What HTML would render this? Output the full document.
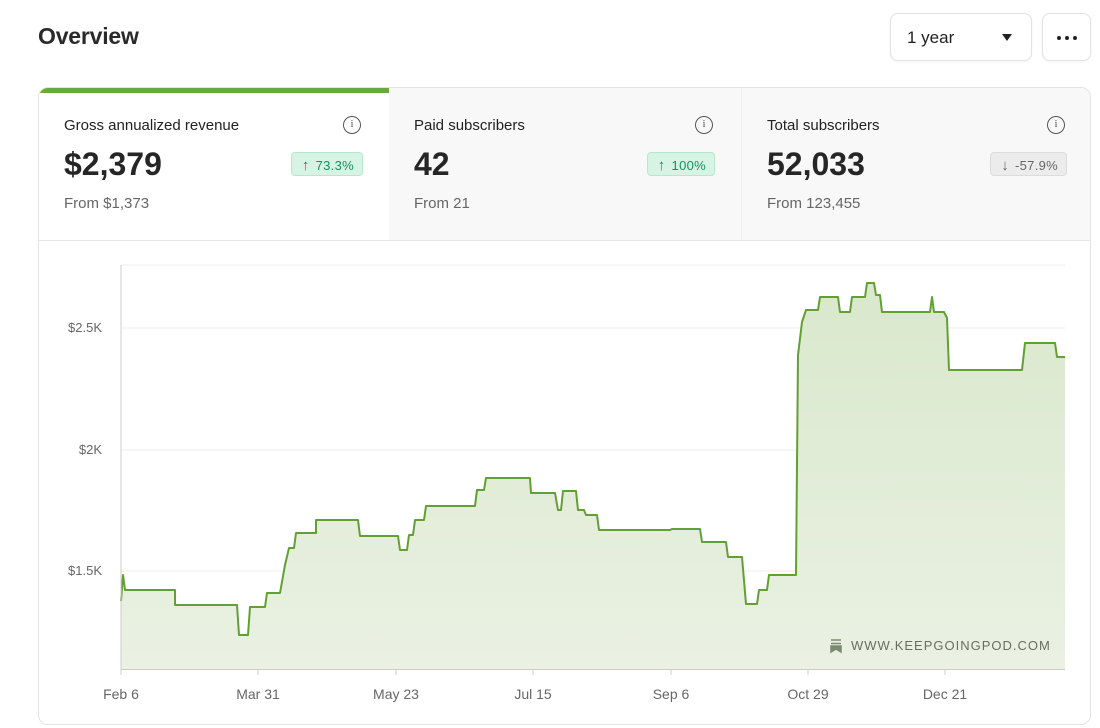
<!DOCTYPE html>
<html><head><meta charset="utf-8"><style>
*{margin:0;padding:0;box-sizing:border-box}
body{width:1100px;height:728px;overflow:hidden;background:#fff;font-family:"Liberation Sans",Arial,sans-serif;color:#222;position:relative}
.t{position:absolute;left:38px;top:23px;font-size:23px;font-weight:bold;color:#2a2a2a;letter-spacing:-0.2px}
.sel{position:absolute;left:890px;top:13px;width:142px;height:48px;border:1px solid #e2e2e2;border-radius:8px;font-size:17px;padding:14px 0 0 16px;color:#222;box-shadow:0 1px 2px rgba(0,0,0,.05)}
.sel:after{content:"";position:absolute;right:19px;top:20px;border-left:5px solid transparent;border-right:5px solid transparent;border-top:7px solid #222}
.more{position:absolute;left:1042px;top:13px;width:49px;height:48px;border:1px solid #e2e2e2;border-radius:8px;box-shadow:0 1px 2px rgba(0,0,0,.05)}
.more i{position:absolute;top:22px;width:4px;height:4px;border-radius:50%;background:#222}
.card{position:absolute;left:38px;top:87px;width:1053px;height:638px;border:1px solid #e3e3e3;border-radius:10px;overflow:hidden}
.tile{position:absolute;top:0;height:153px;background:#f8f8f8;border-bottom:1px solid #e6e6e6}
.tile.a{background:#fff;border-top:5px solid #6aa83c;left:0;width:350px}
.lab{position:absolute;left:25px;top:29px;font-size:15px;color:#222}
.num{position:absolute;left:25px;top:58px;font-size:32px;font-weight:bold;color:#262626}
.from{position:absolute;left:25px;top:107px;font-size:15px;color:#666}
.info{position:absolute;right:28px;top:28px;width:18px;height:18px;border:1.5px solid #555;border-radius:50%;font-size:11px;text-align:center;line-height:15px;color:#555;font-family:"Liberation Serif",serif}
.bd{position:absolute;right:26px;top:64px;height:24px;border-radius:4px;font-size:13px;padding:4px 8px 0 10px;background:#d6f3e4;border:1px solid #b5e8cf;color:#14925a;letter-spacing:.3px}
.bd b{font-size:15px;margin-right:6px}
.bd.g{background:#ececec;border-color:#dcdcdc;color:#666}
svg{position:absolute;left:0;top:0}
.yl{position:absolute;font-size:13px;color:#666;text-align:right;width:60px;left:42px}
.xl{position:absolute;top:686px;font-size:14px;color:#666;width:80px;text-align:center}
</style></head><body>
<div class="t">Overview</div>
<div class="sel">1 year</div>
<div class="more"><i style="left:14px"></i><i style="left:22px"></i><i style="left:30px"></i></div>
<div class="card">
 <div class="tile a"><div class="lab" style="top:24px">Gross annualized revenue</div><div class="info" style="top:23px">i</div><div class="num" style="top:53px">$2,379</div><div class="bd" style="top:59px"><b>↑</b>73.3%</div><div class="from" style="top:102px">From $1,373</div></div>
 <div class="tile" style="left:350px;width:352px;top:0;height:153px"><div class="lab">Paid subscribers</div><div class="info">i</div><div class="num">42</div><div class="bd"><b>↑</b>100%</div><div class="from">From 21</div></div>
 <div class="tile" style="left:702px;width:352px;border-left:1px solid #eee"><div class="lab">Total subscribers</div><div class="info">i</div><div class="num">52,033</div><div class="bd g"><b>↓</b>-57.9%</div><div class="from">From 123,455</div></div>
</div>
<svg width="1100" height="728">
<defs><linearGradient id="gf" x1="0" y1="0" x2="0" y2="1"><stop offset="0" stop-color="#d9e8cc"/><stop offset="1" stop-color="#eaf1e3"/></linearGradient></defs>
<line x1="121" y1="265" x2="1065" y2="265" stroke="#eee"/>
<line x1="121" y1="328" x2="1065" y2="328" stroke="#eee"/>
<line x1="121" y1="450" x2="1065" y2="450" stroke="#eee"/>
<line x1="121" y1="571" x2="1065" y2="571" stroke="#eee"/>
<path d="M121,601 L123,575 L125,590 L175,590 L175,605 L237,605 L239,635 L248,635 L250,607 L265,607 L267,593 L280,593 L285,565 L289,548 L294,548 L296,533 L316,533 L316,520 L358,520 L360,536 L398,536 L400,550 L407,550 L409,535 L413,535 L415,520 L424,520 L426,506 L475,506 L477,490 L484,490 L486,478 L530,478 L531,493 L555,493 L558,510 L561,510 L563,491 L576,491 L578,510 L584,510 L586,515 L597,515 L599,530 L670,530 L672,529 L700,529 L702,542 L726,542 L728,557 L742,557 L746,604 L757,604 L759,590 L767,590 L769,575 L796,575 L798,355 L802,322 L806,310 L818,310 L820,297 L838,297 L840,312 L850,312 L852,297 L865,297 L867,283 L874,283 L876,295 L880,295 L882,312 L930,312 L932,297 L934,312 L944,312 L947,318 L949,370 L1022,370 L1025,343 L1055,343 L1057,357 L1065,357 L1065,669 L121,669 Z" fill="url(#gf)"/>
<path d="M121,601 L123,575 L125,590 L175,590 L175,605 L237,605 L239,635 L248,635 L250,607 L265,607 L267,593 L280,593 L285,565 L289,548 L294,548 L296,533 L316,533 L316,520 L358,520 L360,536 L398,536 L400,550 L407,550 L409,535 L413,535 L415,520 L424,520 L426,506 L475,506 L477,490 L484,490 L486,478 L530,478 L531,493 L555,493 L558,510 L561,510 L563,491 L576,491 L578,510 L584,510 L586,515 L597,515 L599,530 L670,530 L672,529 L700,529 L702,542 L726,542 L728,557 L742,557 L746,604 L757,604 L759,590 L767,590 L769,575 L796,575 L798,355 L802,322 L806,310 L818,310 L820,297 L838,297 L840,312 L850,312 L852,297 L865,297 L867,283 L874,283 L876,295 L880,295 L882,312 L930,312 L932,297 L934,312 L944,312 L947,318 L949,370 L1022,370 L1025,343 L1055,343 L1057,357 L1065,357" fill="none" stroke="#62a034" stroke-width="2" stroke-linejoin="round"/>
<line x1="121" y1="265" x2="121" y2="670" stroke="#ccc"/>
<line x1="121" y1="669.5" x2="1065" y2="669.5" stroke="#ccc"/>
<g stroke="#ccc"><line x1="121" y1="670" x2="121" y2="675"/><line x1="258" y1="670" x2="258" y2="675"/><line x1="396" y1="670" x2="396" y2="675"/><line x1="533" y1="670" x2="533" y2="675"/><line x1="671" y1="670" x2="671" y2="675"/><line x1="808" y1="670" x2="808" y2="675"/><line x1="945" y1="670" x2="945" y2="675"/></g>
<path d="M831,640h10M831,643.5h10M831,646h10v6l-5,-3l-5,3z" stroke="#7a8a70" stroke-width="1.5" fill="#7a8a70"/>
<text x="851" y="650" font-family="Liberation Sans" font-size="13" fill="#66705f" letter-spacing="1">WWW.KEEPGOINGPOD.COM</text>
</svg>
<div class="yl" style="top:320px">$2.5K</div>
<div class="yl" style="top:442px">$2K</div>
<div class="yl" style="top:563px">$1.5K</div>
<div class="xl" style="left:81px">Feb 6</div>
<div class="xl" style="left:218px">Mar 31</div>
<div class="xl" style="left:356px">May 23</div>
<div class="xl" style="left:493px">Jul 15</div>
<div class="xl" style="left:631px">Sep 6</div>
<div class="xl" style="left:768px">Oct 29</div>
<div class="xl" style="left:905px">Dec 21</div>
</body></html>
